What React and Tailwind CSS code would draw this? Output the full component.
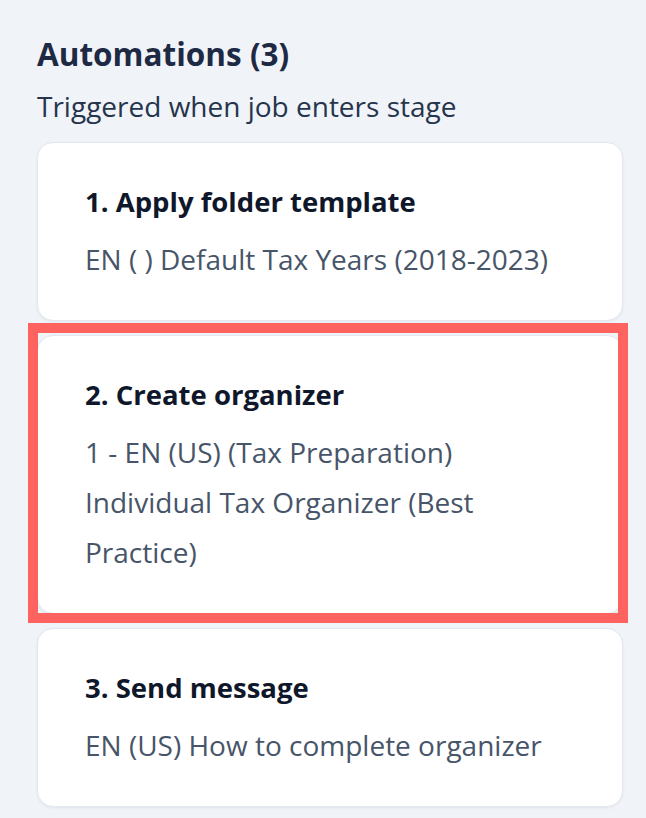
import React from 'react'

// Automations listed for a pipeline stage
const AUTOMATIONS = [
  { id: 1, title: '1. Apply folder template', lines: ['EN ( ) Default Tax Years (2018-2023)'] },
  { id: 2, title: '2. Create organizer', lines: ['1 - EN (US) (Tax Preparation) Individual Tax Organizer (Best Practice)'], highlight: true },
  { id: 3, title: '3. Send message', lines: ['EN (US) How to complete organizer'] },
]

function AutomationCard({ item }) {
  return (
    <div className="relative">
      <div className="rounded-[16px] border border-[#e2e8f0] bg-white pl-[47px] pr-[44px] pt-[41px] pb-[36px] shadow-[0_1px_3px_rgba(15,23,42,0.06)]">
        <div className="text-[27.5px] leading-[36px] font-bold text-[#0f172a]">{item.title}</div>
        <div className="mt-[14px] text-[28px] leading-[50px] text-[#475569]">
          {item.lines.map((l, i) => <div key={i}>{l}</div>)}
        </div>
      </div>
      {item.highlight && (
        <div className="pointer-events-none absolute -top-[12px] -left-[9px] -right-[5px] -bottom-[9px] border-[10px] border-[#ff635f]" />
      )}
    </div>
  )
}

export default function App() {
  return (
    <div className="min-h-screen w-[646px] bg-[#f0f4f8] pl-[37px] pr-[23px] pt-[36px] pb-[12px]" style={{ fontFamily: '"Open Sans", Lato, sans-serif' }}>
      <h2 className="text-[31.5px] leading-[36px] font-bold text-[#1e2a44]">Automations (3)</h2>
      <p className="mt-[16px] text-[28px] leading-[36px] text-[#27344d]">Triggered when job enters stage</p>
      <div className="mt-[18px] flex flex-col gap-[14px]">
        {AUTOMATIONS.map(a => <AutomationCard key={a.id} item={a} />)}
      </div>
    </div>
  )
}
